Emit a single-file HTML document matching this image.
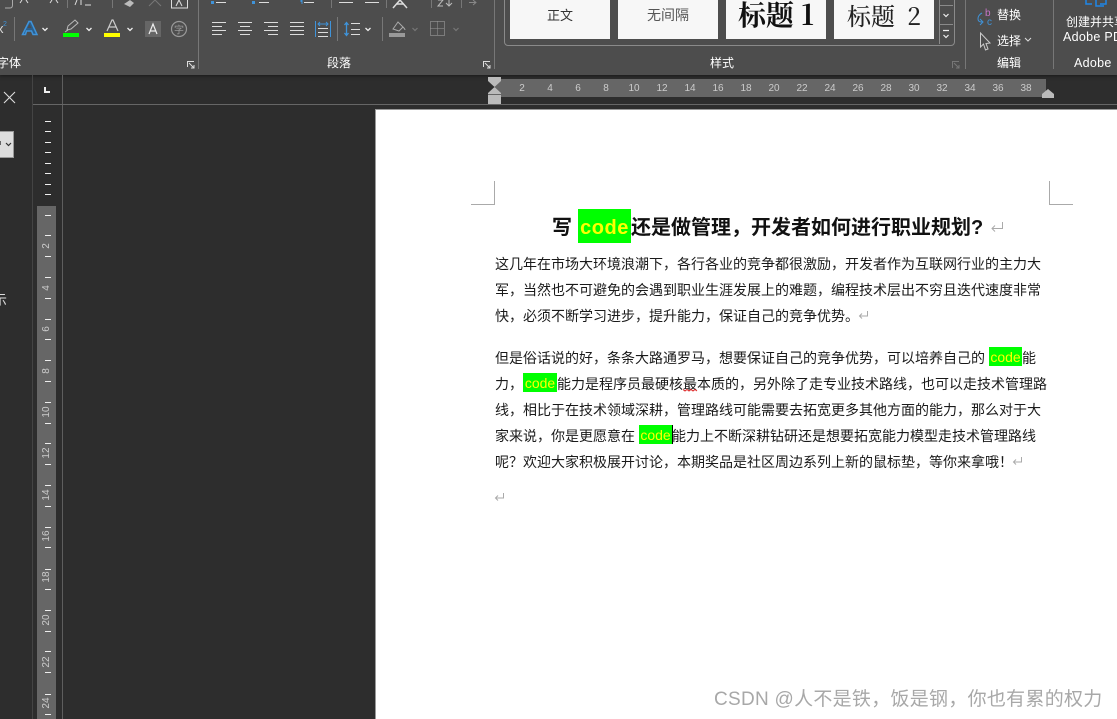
<!DOCTYPE html>
<html lang="zh"><head><meta charset="utf-8"><title>Word</title>
<style>
html,body{margin:0;padding:0;width:1117px;height:719px;overflow:hidden;background:#2d2d2d}
body{position:relative;font-family:"Liberation Sans","Noto Sans CJK SC",sans-serif}
div,span.a{position:absolute}
.t{position:absolute;white-space:nowrap;line-height:20px}
.b{color:#1a1a1a;font-size:14px;font-family:"Liberation Sans","Noto Sans CJK SC",sans-serif;height:20px;left:495px}
.c{display:inline-block;background:#0f0;color:#ff0;font-size:14px;height:19px;line-height:20px;text-align:center;vertical-align:top;margin-top:0}
.g{color:#fff;font-size:12px;text-align:center}
.s{position:absolute;width:1px;background:#777}
.tile{position:absolute;top:0;height:39px;width:100px;background:#f7f7f7;color:#333;text-align:center;white-space:nowrap}
.r{position:absolute;color:#ccc;font:10px/12px "Liberation Sans",sans-serif;top:83px;width:20px;text-align:center}
.v{position:absolute;color:#ccc;font:10px/12px "Liberation Sans",sans-serif;left:37px;width:20px;height:12px;text-align:center;transform:rotate(-90deg)}
.k{position:absolute;left:45px;width:6px;height:1px;background:#eee}
.pm{position:absolute;color:#aaa;font-size:14px;line-height:14px}
</style></head><body>

<!-- ribbon -->
<div style="left:0;top:0;width:1117px;height:75px;background:#4d4d4d;box-shadow:0 1px 3px #1a1a1a"></div>
<div class="s" style="left:198px;top:0;height:69px"></div>
<div class="s" style="left:494px;top:0;height:69px"></div>
<div class="s" style="left:965px;top:0;height:69px"></div>
<div class="s" style="left:1053px;top:0;height:69px"></div>
<div class="s" style="left:14px;top:17px;height:24px"></div>
<div class="s" style="left:337px;top:17px;height:24px"></div>
<div class="s" style="left:382px;top:17px;height:24px"></div>
<div class="s" style="left:67px;top:0;height:8px"></div>
<div class="s" style="left:112px;top:0;height:8px"></div>
<div class="s" style="left:331px;top:0;height:8px"></div>
<div class="s" style="left:386px;top:0;height:8px"></div>
<div class="s" style="left:431px;top:0;height:8px"></div>
<div class="s" style="left:461px;top:0;height:8px"></div>

<svg style="position:absolute;left:0;top:0" width="500" height="75" viewBox="0 0 500 75" fill="none">
<!-- top row stubs -->
<path d="M5 8H10Q12.500 8 12.500 5V0" stroke="#aaa"/>
<path d="M20 3l2-3M28 3l-2-3M50 3l2-3M58 3l-2-3M75 5l2-5M81 5V0M85 5h6" stroke="#ddd"/>
<path d="M124 4l6-4 4 3-4 4z" fill="#bbb"/><path d="M149 6l6-6M161 6l-6-6" stroke="#777"/>
<path d="M171.500 0V8H187.500V0" stroke="#ddd"/><path d="M176 6l3-6 3 6" stroke="#ddd"/>
<rect x="211" y="1" width="3" height="3" fill="#3f93d9"/><path d="M216 2.500H226M259 2.500H269" stroke="#ddd"/>
<rect x="252" y="1" width="3" height="3" fill="#3f93d9"/>
<path d="M302 0V4M301 0V2" stroke="#3f93d9"/><path d="M304 2.500H314M339 2.500H353M365 2.500H379" stroke="#ddd"/>
<path d="M393 8l7-8 7 8M396 4H404" stroke="#ddd" stroke-width="1.500"/>
<path d="M438 0h5l-5 6h5M449 0v6M446 3l3 3 3-3" stroke="#bbb"/>
<path d="M469 2.500h7M473 0l3 2.500-3 2.500" stroke="#888"/>
<!-- x2 -->
<text x="-3" y="33" fill="#ddd" font-size="13" font-family="Liberation Sans">x</text>
<text x="3" y="26" fill="#3f93d9" font-size="7" font-family="Liberation Sans">2</text>
<!-- text effect A -->
<path d="M22.500 34.500L29 21.500h2L37 34.500h-4l-1.500-3.500h-5L25.500 34.500z" stroke="#3f93d9" stroke-width="1.500" fill="#2c5f8c"/>
<path d="M27.500 28h4L29.500 24z" fill="#4d4d4d"/>
<path d="M42.500 28l2.500 2.500 2.500-2.500M86.500 28l2.500 2.500 2.500-2.500M127.500 28l2.500 2.500 2.500-2.500M365.500 28l2.500 2.500 2.500-2.500" stroke="#eee" stroke-width="1.300"/>
<!-- highlight -->
<path d="M67 30l1-4 7-6 3 3-7 6z" stroke="#bbb"/><path d="M65 32l3-2" stroke="#bbb"/>
<rect x="63" y="33" width="16" height="4" fill="#00ff00"/>
<!-- font color -->
<path d="M107 31L112 20h1L118 31M109 27h7" stroke="#ccc" stroke-width="1.200"/>
<rect x="104" y="33" width="16" height="4" fill="#ffff00"/>
<!-- shaded A -->
<rect x="145" y="21" width="16" height="16" fill="#666"/>
<path d="M149 34L153 24L157 34M150.500 31h5" stroke="#eee" stroke-width="1.200"/>
<!-- circle -->
<circle cx="179" cy="29" r="7.500" stroke="#999" stroke-width="1.200"/>
<text x="174" y="33.500" fill="#999" font-size="10" font-family="Noto Sans CJK SC">字</text>
<!-- aligns -->
<path d="M212 22.500H226M212 26.500H222M212 30.500H226M212 34.500H222" stroke="#ddd"/>
<path d="M238 22.500H252M240 26.500H250M238 30.500H252M240 34.500H250" stroke="#ddd"/>
<path d="M264 22.500H278M268 26.500H278M264 30.500H278M268 34.500H278" stroke="#ddd"/>
<path d="M290 22.500H304M290 26.500H304M290 30.500H304M290 34.500H304" stroke="#ddd"/>
<path d="M315.500 21V37M330.500 21V37" stroke="#3f93d9"/>
<path d="M318 24H328M320 22l-2 2 2 2M326 22l2 2-2 2" stroke="#3f93d9"/>
<path d="M318 28.500H328M318 32.500H328M318 36.500H328" stroke="#ddd"/>
<!-- line spacing -->
<path d="M346.500 23V35M344.500 25l2-2.500 2 2.500M344.500 33l2 2.500 2-2.500" stroke="#3f93d9" stroke-width="1.300"/>
<path d="M351 23.500H360M351 29.500H360M351 34.500H360" stroke="#ddd"/>
<!-- shading -->
<path d="M393 29l5-7 5 5-4 4z" stroke="#aaa"/><path d="M403 27q2 2 2 3" stroke="#aaa"/>
<rect x="389" y="33" width="16" height="4" fill="#999"/>
<path d="M412.500 28l2.500 2.500 2.500-2.500M453.500 28l2.500 2.500 2.500-2.500" stroke="#777" stroke-width="1.200"/>
<!-- borders -->
<path d="M430.500 21.500H444.500V35.500H430.500z" stroke="#aaa" stroke-dasharray="1 1"/>
<path d="M437.500 21.500V35.500M430.500 28.500H444.500" stroke="#999" stroke-dasharray="1 1"/>
<!-- launcher -->
<path d="M187.500 67V61.500H194M189 63l5 5M194 65v3h-3" stroke="#ddd"/>
<path d="M483.500 67V61.500H490M485 63l5 5M490 65v3h-3" stroke="#ddd"/>
</svg>

<div class="t g" style="left:-3px;top:53px;font-size:12px">字体</div>
<div class="t g" style="left:327px;top:53px">段落</div>

<!-- styles -->
<div style="left:504px;top:-4px;width:449px;height:48px;border:1px solid #8a8a8a;border-radius:4px"></div>
<div class="tile" style="left:510px;font-size:13px;line-height:31px">正文</div>
<div class="tile" style="left:618px;font-size:14px;line-height:31px;color:#555">无间隔</div>
<div class="tile" style="left:726px;font:bold 28px/28px 'Noto Serif CJK SC','Liberation Serif',serif;color:#111">标题 1</div>
<div class="tile" style="left:834px;font:500 24px/30px 'Noto Serif CJK SC','Liberation Serif',serif;color:#222">标题&nbsp; 2</div>
<div style="left:939px;top:-1px;width:14px;height:45px;border-left:1px solid #8a8a8a"></div>
<div style="left:939px;top:5px;width:14px;height:1px;background:#8a8a8a"></div>
<div style="left:939px;top:24px;width:14px;height:1px;background:#8a8a8a"></div>
<svg style="position:absolute;left:939px;top:0" width="15" height="45" fill="none" stroke="#eee" stroke-width="1.200">
<path d="M4.500 14l2.500 2.500 2.500-2.500"/><path d="M4 30.500H10M4.500 35l2.500 2.500 2.500-2.500"/></svg>
<div class="t g" style="left:710px;top:53px">样式</div>
<svg style="position:absolute;left:951px;top:60px" width="10" height="10" fill="none" stroke="#777"><path d="M1.500 8V1.500H8M3 3l5 5M8 5v3H5"/></svg>

<!-- edit -->
<svg style="position:absolute;left:975px;top:5px" width="22" height="46" fill="none">
<text x="10" y="11" fill="#c774c7" font-size="10" font-family="Liberation Sans">b</text>
<text x="12" y="20" fill="#3f93d9" font-size="10" font-family="Liberation Sans">c</text>
<path d="M7 8Q3 10 3 14Q3 17 7 17M5 20l3-3-3-3" stroke="#3f93d9"/>
<path d="M5.500 28V42L8.500 39L10.500 45L13 44L11 38.500L15 38z" stroke="#ccc"/>
</svg>
<div class="t g" style="left:997px;top:5px">替换</div>
<div class="t g" style="left:997px;top:31px">选择</div>
<svg style="position:absolute;left:1024px;top:37px" width="8" height="6" fill="none" stroke="#ddd"><path d="M1 1l3 3 3-3"/></svg>
<div class="t g" style="left:997px;top:53px">编辑</div>

<!-- adobe -->
<svg style="position:absolute;left:1085px;top:0" width="28" height="10" fill="none" stroke="#1f87e8" stroke-width="1.500"><path d="M1 0V4H7M21 0V4H15M11 0V6H19"/></svg>
<div class="t g" style="left:1066px;top:12px;font-size:12px">创建并共享</div>
<div class="t g" style="left:1063px;top:27px;font-size:12.500px;letter-spacing:.3px">Adobe PDF</div>
<div class="t g" style="left:1074px;top:53px;font-size:12.500px;letter-spacing:.3px">Adobe</div>

<!-- left side chrome -->
<div style="left:32px;top:75px;width:1px;height:644px;background:#444"></div>
<div style="left:62px;top:75px;width:1px;height:644px;background:#5e5e5e"></div>
<div style="left:33px;top:104px;width:1084px;height:1px;background:#666"></div>
<svg style="position:absolute;left:3px;top:91px" width="13" height="13" fill="none" stroke="#ddd" stroke-width="1.100"><path d="M1 1L12 12M12 1L1 12"/></svg>
<svg style="position:absolute;left:44px;top:87px" width="7" height="7"><path d="M0 0H2V4H6V6H0z" fill="#eee"/></svg>
<div style="left:0;top:131px;width:13px;height:25px;background:#ddd;border:1px solid #999;border-left:0"></div>
<div style="left:0;top:141px;width:1px;height:4px;background:#666"></div>
<svg style="position:absolute;left:5px;top:142px" width="7" height="5" fill="none" stroke="#333" stroke-width="1.200"><path d="M1 1l2.500 2.500L6 1"/></svg>
<div class="t" style="left:-7px;top:290px;color:#ddd;font-size:14px;width:14px;overflow:hidden;text-align:right">示</div>

<!-- horizontal ruler -->
<div style="left:495px;top:79px;width:551px;height:18px;background:#666"></div>
<svg style="position:absolute;left:488px;top:77px" width="14" height="28"><path d="M0 0H13V4L6.500 10L0 4z" fill="#bbb"/><path d="M6.500 10L13 16V27H0V16z" fill="#bbb"/><path d="M0 17.500H13" stroke="#666"/></svg>
<svg style="position:absolute;left:1041px;top:88px" width="14" height="10"><path d="M1 10V6L7 1L13 6V10z" fill="#bbb"/></svg>
<span class="r" style="left:512px">2</span><span class="r" style="left:540px">4</span><span class="r" style="left:568px">6</span><span class="r" style="left:596px">8</span>
<span class="r" style="left:624px">10</span><span class="r" style="left:652px">12</span><span class="r" style="left:680px">14</span><span class="r" style="left:708px">16</span>
<span class="r" style="left:736px">18</span><span class="r" style="left:764px">20</span><span class="r" style="left:792px">22</span><span class="r" style="left:820px">24</span>
<span class="r" style="left:848px">26</span><span class="r" style="left:876px">28</span><span class="r" style="left:904px">30</span><span class="r" style="left:932px">32</span>
<span class="r" style="left:960px">34</span><span class="r" style="left:988px">36</span><span class="r" style="left:1016px">38</span>

<!-- vertical ruler -->
<div style="left:37px;top:206px;width:19px;height:513px;background:#666"></div>
<i class="k" style="top:121px"></i><i class="k" style="top:131px"></i><i class="k" style="top:142px"></i><i class="k" style="top:152px"></i>
<i class="k" style="top:163px"></i><i class="k" style="top:173px"></i><i class="k" style="top:184px"></i><i class="k" style="top:194px"></i>
<i class="k" style="top:215px"></i><i class="k" style="top:235px"></i><i class="k" style="top:256px"></i><i class="k" style="top:277px"></i>
<i class="k" style="top:298px"></i><i class="k" style="top:319px"></i><i class="k" style="top:339px"></i><i class="k" style="top:360px"></i>
<i class="k" style="top:381px"></i><i class="k" style="top:402px"></i><i class="k" style="top:423px"></i><i class="k" style="top:443px"></i>
<i class="k" style="top:464px"></i><i class="k" style="top:485px"></i><i class="k" style="top:506px"></i><i class="k" style="top:527px"></i>
<i class="k" style="top:547px"></i><i class="k" style="top:569px"></i><i class="k" style="top:589px"></i><i class="k" style="top:610px"></i>
<i class="k" style="top:631px"></i><i class="k" style="top:651px"></i><i class="k" style="top:672px"></i><i class="k" style="top:694px"></i><i class="k" style="top:714px"></i>
<span class="v" style="top:240px">2</span><span class="v" style="top:282px">4</span><span class="v" style="top:323px">6</span><span class="v" style="top:365px">8</span>
<span class="v" style="top:406px">10</span><span class="v" style="top:447px">12</span><span class="v" style="top:489px">14</span><span class="v" style="top:530px">16</span>
<span class="v" style="top:571px">18</span><span class="v" style="top:614px">20</span><span class="v" style="top:656px">22</span><span class="v" style="top:697px">24</span>

<!-- page -->
<div style="left:375px;top:109px;width:742px;height:610px;background:#999"></div>
<div style="left:376px;top:110px;width:741px;height:609px;background:#fff"></div>
<div style="left:471px;top:181px;width:23px;height:23px;border-right:1px solid #aaa;border-bottom:1px solid #aaa"></div>
<div style="left:1049px;top:181px;width:23px;height:23px;border-left:1px solid #aaa;border-bottom:1px solid #aaa"></div>

<!-- title -->
<div style="left:578px;top:209px;width:53px;height:34px;background:#0f0"></div>
<div class="t" style="left:552px;top:218px;font-size:20px;font-weight:700;color:#111">写</div>
<div class="t" style="left:578px;top:218px;width:53px;text-align:center;font-size:20px;letter-spacing:.5px;font-weight:700;color:#ff0">code</div>
<div class="t" style="left:631px;top:218px;font-size:20px;font-weight:700;color:#111">还是做管理，开发者如何进行职业规划?</div>

<svg style="position:absolute;left:990px;top:221px" width="14" height="12" fill="none" stroke="#aaa"><path d="M12.500 1V7.500H2M5 4.500L2 7.500L5 10.500"/></svg>

<!-- body -->
<div class="t b" style="top:254px">这几年在市场大环境浪潮下，各行各业的竞争都很激励，开发者作为互联网行业的主力大</div>
<div class="t b" style="top:280px">军，当然也不可避免的会遇到职业生涯发展上的难题，编程技术层出不穷且迭代速度非常</div>
<div class="t b" style="top:306px">快，必须不断学习进步，提升能力，保证自己的竞争优势。</div>
<svg style="position:absolute;left:858px;top:310px" width="11" height="10" fill="none" stroke="#aaa"><path d="M9.500 1V6H1.500M4 3.500L1.500 6L4 8.500"/></svg>

<div class="t b" style="top:348px">但是俗话说的好，条条大路通罗马，想要保证自己的竞争优势，可以培养自己的</div>
<div class="t c" style="left:989px;top:347px;width:33px">code</div>
<div class="t b" style="left:1022px;top:348px">能</div>

<div class="t b" style="top:374px">力，</div>
<div class="t c" style="left:523px;top:373px;width:34px">code</div>
<div class="t b" style="left:557px;top:374px">能力是程序员最硬核最本质的，另外除了走专业技术路线，也可以走技术管理路</div>
<svg style="position:absolute;left:683px;top:388px" width="15" height="4" fill="none" stroke="#d22"><path d="M0 1.500l2 1.500 2-1.500 2 1.500 2-1.500 2 1.500 2-1.500 2 1.500"/></svg>

<div class="t b" style="top:400px">线，相比于在技术领域深耕，管理路线可能需要去拓宽更多其他方面的能力，那么对于大</div>

<div class="t b" style="top:426px">家来说，你是更愿意在</div>
<div class="t c" style="left:639px;top:425px;width:33px">code</div>
<div style="left:672px;top:425px;width:1px;height:19px;background:#000"></div>
<div class="t b" style="left:672px;top:426px">能力上不断深耕钻研还是想要拓宽能力模型走技术管理路线</div>

<div class="t b" style="top:452px">呢？欢迎大家积极展开讨论，本期奖品是社区周边系列上新的鼠标垫，等你来拿哦！</div>
<svg style="position:absolute;left:1012px;top:456px" width="11" height="10" fill="none" stroke="#aaa"><path d="M9.500 1V6H1.500M4 3.500L1.500 6L4 8.500"/></svg>
<svg style="position:absolute;left:494px;top:492px" width="11" height="10" fill="none" stroke="#aaa"><path d="M9.500 1V6H1.500M4 3.500L1.500 6L4 8.500"/></svg>

<!-- watermark -->
<div class="t" style="left:714px;top:690px;font-size:19px;color:#a8a8a8;line-height:20px;letter-spacing:.28px">CSDN @人不是铁，饭是钢，你也有累的权力</div>
</body></html>
